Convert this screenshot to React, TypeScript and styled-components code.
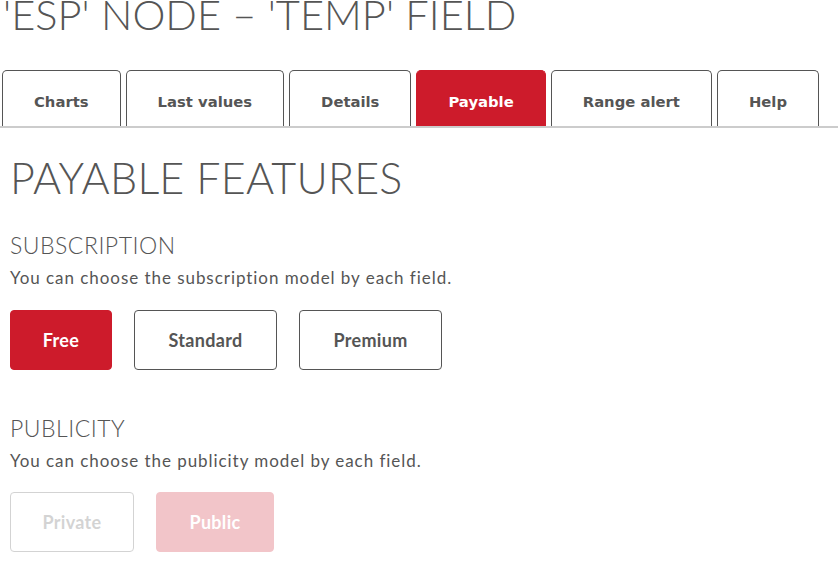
import styled, { createGlobalStyle } from "styled-components";

const GlobalStyle = createGlobalStyle`
  body {
    margin: 0;
    background: #ffffff;
    font-family: "Lato", "Open Sans", sans-serif;
    color: #555555;
  }
`;

const RED = "#cd1b2b";

const Page = styled.div`
  width: 838px;
  height: 564px;
  overflow: hidden;
`;

const Title = styled.h1`
  margin: -11px 0 0 3px;
  font-family: "Lato", sans-serif;
  font-weight: 300;
  font-size: 41.6px;
  line-height: 50px;
  color: #555555;
  white-space: nowrap;
`;

const TabBar = styled.div`
  display: flex;
  gap: 5px;
  margin-top: 31px;
  padding-left: 2px;
  border-bottom: 2px solid #cccccc;
`;

const Tab = styled.div<{ $active?: boolean }>`
  display: flex;
  align-items: center;
  justify-content: center;
  box-sizing: border-box;
  height: 56px;
  padding: 5px 31px 0;
  border: 1px solid ${(p) => (p.$active ? RED : "#555555")};
  border-bottom: none;
  border-radius: 5px 5px 0 0;
  background: ${(p) => (p.$active ? RED : "#ffffff")};
  color: ${(p) => (p.$active ? "#ffffff" : "#555555")};
  font-family: "DejaVu Sans", Verdana, sans-serif;
  font-weight: bold;
  font-size: 14.8px;
`;

const Content = styled.div`
  padding: 0 10px;
`;

const PageHeading = styled.h2`
  margin: 22px 0 0;
  font-weight: 300;
  font-size: 43px;
  line-height: 56px;
  letter-spacing: 0.2px;
  color: #555555;
`;

const SectionTitle = styled.h3`
  margin: 0;
  font-weight: 300;
  font-size: 23px;
  line-height: 28px;
  letter-spacing: 0.5px;
  color: #555555;
`;

const Section = styled.section<{ $top: number }>`
  margin-top: ${(p) => p.$top}px;
`;

const Description = styled.p`
  margin: 9px 0 0;
  font-size: 17px;
  line-height: 20px;
  letter-spacing: 0.95px;
  color: #555555;
`;

const ButtonRow = styled.div<{ $top: number }>`
  display: flex;
  gap: 22px;
  margin-top: ${(p) => p.$top}px;
`;

const OptionButton = styled.button<{ $selected?: boolean; $width: number; $dim?: boolean }>`
  box-sizing: border-box;
  width: ${(p) => p.$width}px;
  height: 60px;
  border-radius: 4px;
  border: 1px solid ${(p) => (p.$selected ? RED : "#555555")};
  background: ${(p) => (p.$selected ? RED : "#ffffff")};
  color: ${(p) => (p.$selected ? "#ffffff" : "#555555")};
  font-family: "Lato", sans-serif;
  font-weight: bold;
  font-size: 18px;
  letter-spacing: 0.3px;
  opacity: ${(p) => (p.$dim ? 0.25 : 1)};
  cursor: pointer;
`;

const tabs = ["Charts", "Last values", "Details", "Payable", "Range alert", "Help"];

export default function App() {
  return (
    <Page>
      <GlobalStyle />
      <Title>'ESP' NODE – 'TEMP' FIELD</Title>
      <TabBar>
        {tabs.map((t) => (
          <Tab key={t} $active={t === "Payable"}>
            {t}
          </Tab>
        ))}
      </TabBar>
      <Content>
        <PageHeading>PAYABLE FEATURES</PageHeading>
        <Section $top={25}>
          <SectionTitle>SUBSCRIPTION</SectionTitle>
          <Description>You can choose the subscription model by each field.</Description>
          <ButtonRow $top={22}>
            <OptionButton $selected $width={102}>Free</OptionButton>
            <OptionButton $width={143}>Standard</OptionButton>
            <OptionButton $width={143}>Premium</OptionButton>
          </ButtonRow>
        </Section>
        <Section $top={44}>
          <SectionTitle>PUBLICITY</SectionTitle>
          <Description>You can choose the publicity model by each field.</Description>
          <ButtonRow $top={21}>
            <OptionButton $dim $width={124}>Private</OptionButton>
            <OptionButton $dim $selected $width={118}>Public</OptionButton>
          </ButtonRow>
        </Section>
      </Content>
    </Page>
  );
}
